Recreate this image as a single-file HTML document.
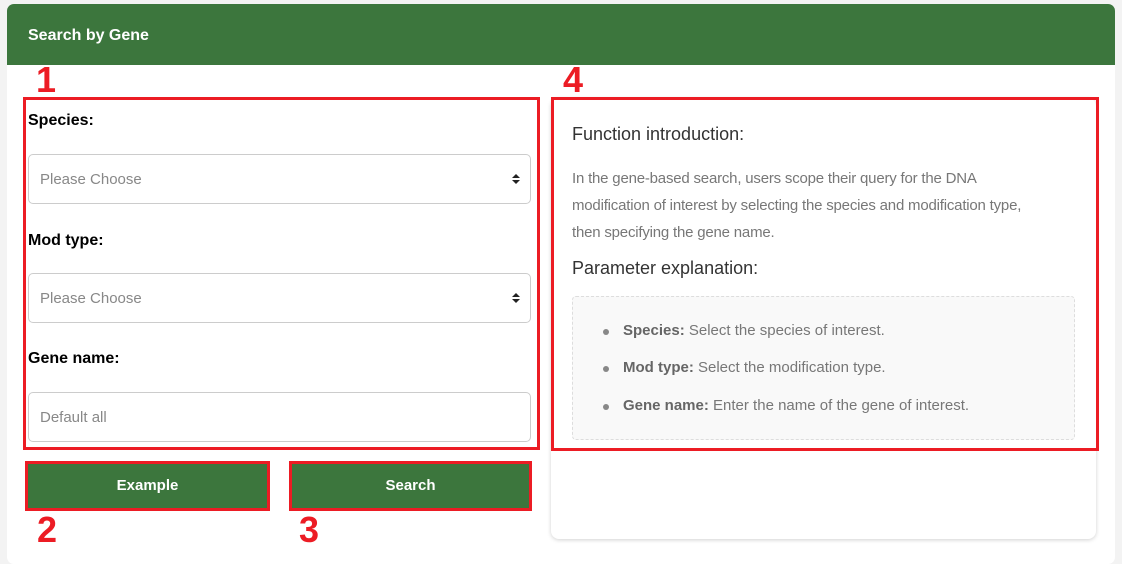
<!DOCTYPE html>
<html><head><style>
*{box-sizing:border-box;margin:0;padding:0}
body{width:1122px;height:551px;background:#f3f3f3;font-family:"Liberation Sans",sans-serif;position:relative;overflow:hidden}
.a{position:absolute}
.card{left:7px;top:4px;width:1108px;height:560px;background:#fff;border-radius:7px;overflow:hidden}
.hdr{left:7px;top:4px;width:1108px;height:61px;background:#3c763d;border-radius:7px 7px 0 0;color:#fff;font-weight:bold;font-size:16px;padding:23px 0 0 21px}
.num{color:#ec1c24;font-weight:bold;font-size:36px;line-height:36px}
.rb{border:3px solid #ec1c24}
.lbl{font-weight:bold;font-size:16px;color:#000}
.sel{border:1px solid #ccc;border-radius:5px;background:#fff;width:503px;height:50px;left:28px;font-size:15px;color:#888;padding:16px 0 0 11px}
.arr{position:absolute;right:10px;top:18px;width:8px;height:12px}
.btn{background:#3c763d;color:#fff;font-weight:bold;font-size:15px;text-align:center;line-height:44px;border:3px solid #ec1c24}
.inner{left:551px;top:98px;width:545px;height:441px;background:#fff;border-radius:8px;box-shadow:0 1px 4px rgba(0,0,0,.18)}
.h{font-size:18px;color:#333}
.p{font-size:15px;color:#777;line-height:27px;white-space:nowrap;letter-spacing:-0.2px}
.gb{left:572px;top:296px;width:503px;height:144px;background:#f9f9f9;border:1px dashed #ddd;border-radius:4px}
.li{font-size:15px;color:#777;left:623px}
.li b{color:#666}
.dot{width:6px;height:6px;border-radius:3px;background:#888;left:603px}
</style></head><body>
<div class="a card"></div>
<div class="a hdr">Search by Gene</div>
<div class="a inner"></div>
<div class="a num" style="left:36px;top:62px">1</div>
<div class="a rb" style="left:23px;top:97px;width:517px;height:353px"></div>
<div class="a lbl" style="left:28px;top:112px">Species:</div>
<div class="a sel" style="top:154px">Please Choose<svg class="arr" viewBox="0 0 8 12"><path d="M0 5L4 1L8 5ZM0 7L4 11L8 7Z" fill="#222"/></svg></div>
<div class="a lbl" style="left:28px;top:232px">Mod type:</div>
<div class="a sel" style="top:273px">Please Choose<svg class="arr" viewBox="0 0 8 12"><path d="M0 5L4 1L8 5ZM0 7L4 11L8 7Z" fill="#222"/></svg></div>
<div class="a lbl" style="left:28px;top:350px">Gene name:</div>
<div class="a sel" style="top:392px">Default all</div>
<div class="a btn" style="left:25px;top:461px;width:245px;height:50px">Example</div>
<div class="a btn" style="left:289px;top:461px;width:243px;height:50px">Search</div>
<div class="a num" style="left:37px;top:512px">2</div>
<div class="a num" style="left:299px;top:512px">3</div>
<div class="a num" style="left:563px;top:62px">4</div>
<div class="a rb" style="left:551px;top:97px;width:548px;height:354px"></div>
<div class="a h" style="left:572px;top:124px">Function introduction:</div>
<div class="a p" style="left:572px;top:165px">In the gene-based search, users scope their query for the DNA<br>modification of interest by selecting the species and modification type,<br>then specifying the gene name.</div>
<div class="a h" style="left:572px;top:258px">Parameter explanation:</div>
<div class="a gb"></div>
<div class="a dot" style="top:329px"></div>
<div class="a li" style="top:322px"><b>Species:</b> Select the species of interest.</div>
<div class="a dot" style="top:366px"></div>
<div class="a li" style="top:359px"><b>Mod type:</b> Select the modification type.</div>
<div class="a dot" style="top:404px"></div>
<div class="a li" style="top:397px"><b>Gene name:</b> Enter the name of the gene of interest.</div>
</body></html>
